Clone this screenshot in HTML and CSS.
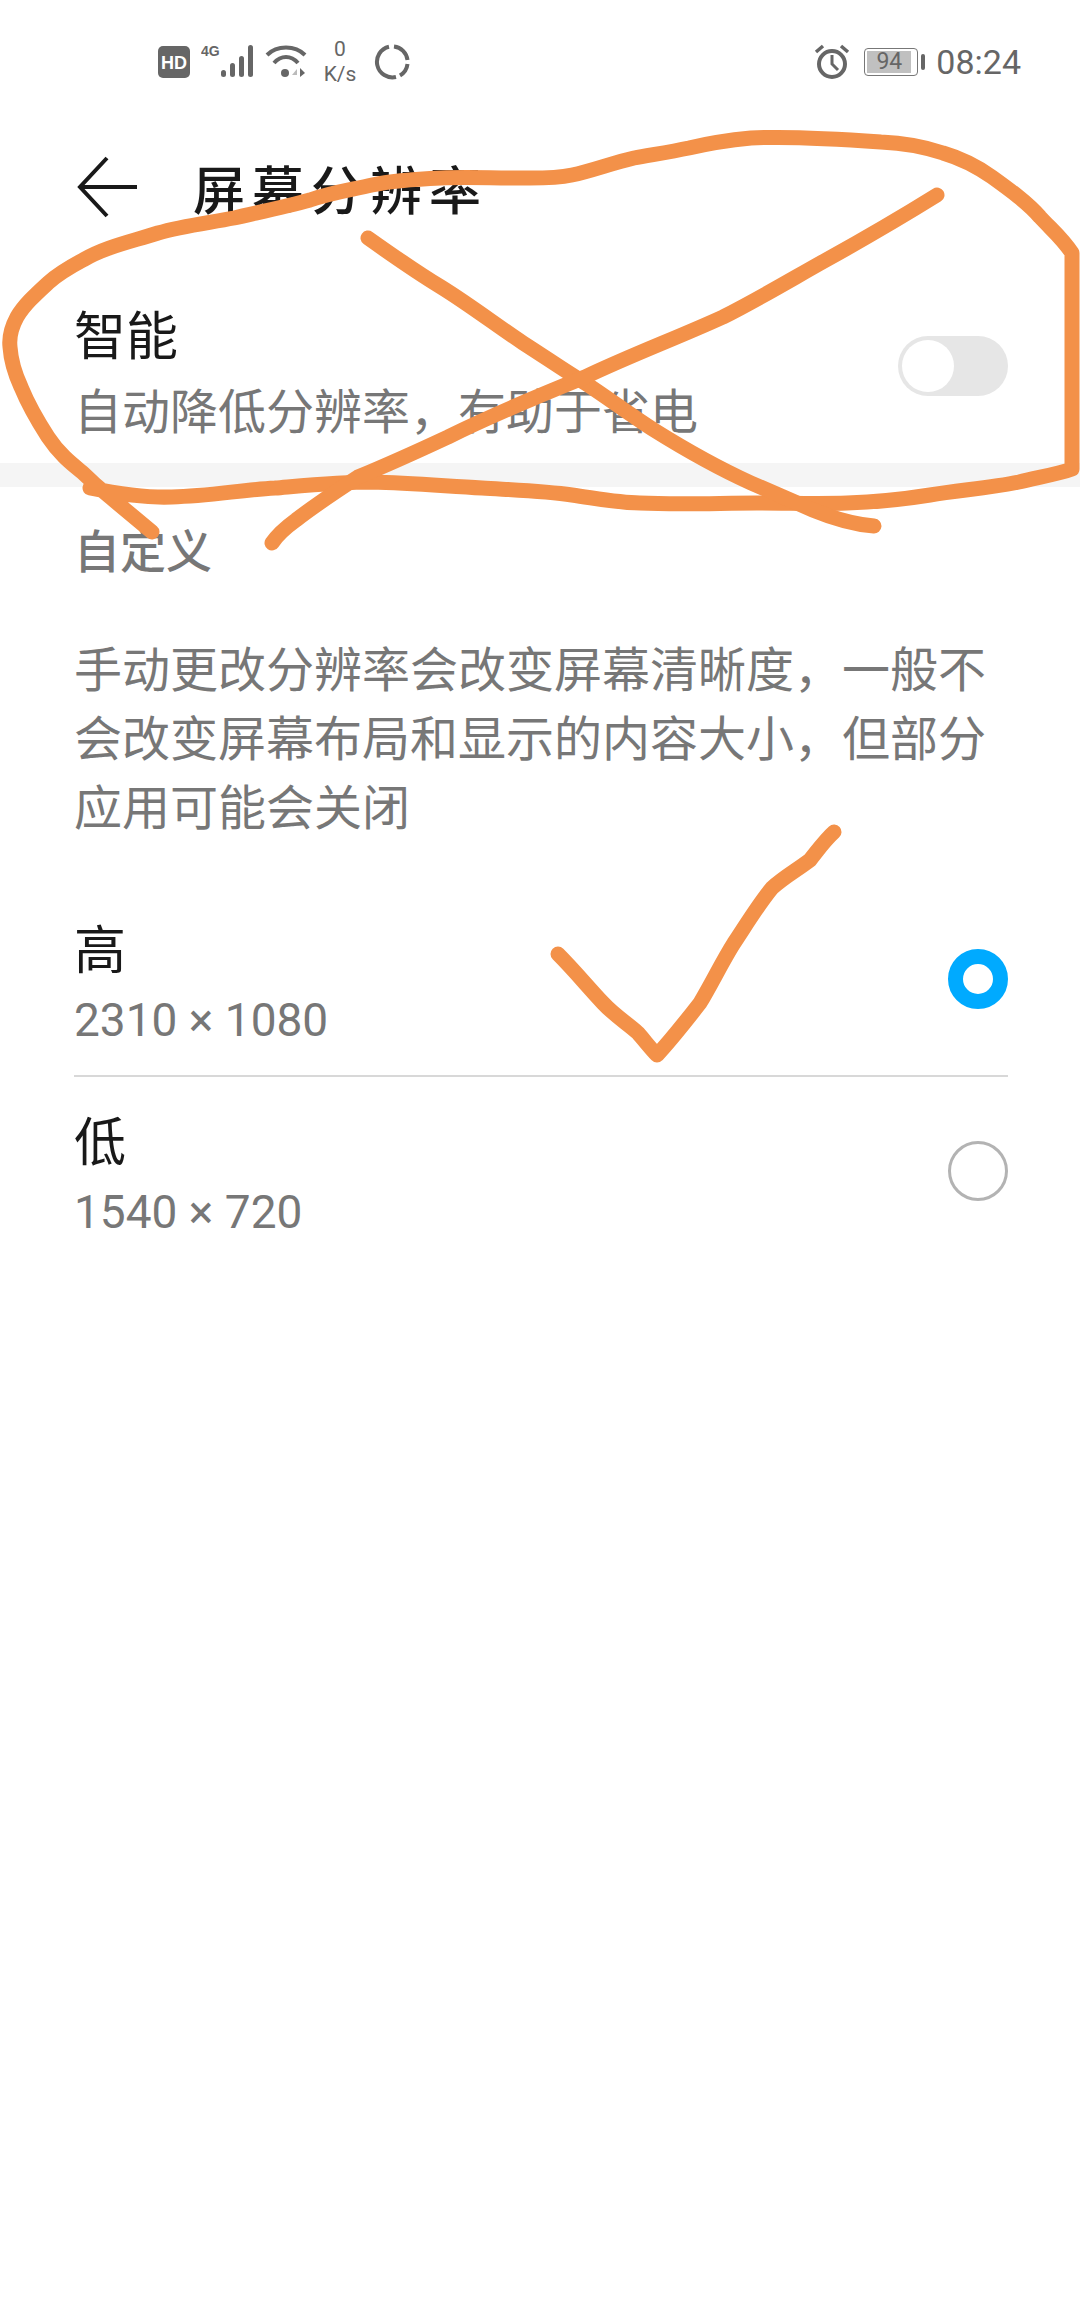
FILE: index.html

```html
<!DOCTYPE html>
<html lang="zh-CN">
<head>
    <meta charset="UTF-8">
    <meta name="viewport" content="width=device-width, initial-scale=1.0">
    <title>屏幕分辨率</title>
    <link rel="stylesheet" href="styles.css">
</head>
<body>
    <div class="screen">
        <!-- Status bar -->
        <div class="status-bar">
            <div class="status-left">
                <svg class="ic-hd" width="32" height="32" viewBox="0 0 32 32">
                    <rect width="32" height="32" rx="5" fill="#666"/>
                    <text x="16" y="23" text-anchor="middle" class="hd-text">HD</text>
                </svg>
                <svg class="ic-signal" width="54" height="36" viewBox="0 0 54 36">
                    <text x="0" y="13" class="net-text">4G</text>
                    <rect x="20" y="27" width="5" height="7" rx="2.5" fill="#666"/>
                    <rect x="29" y="20" width="5" height="14" rx="2.5" fill="#666"/>
                    <rect x="38" y="13" width="5" height="21" rx="2.5" fill="#666"/>
                    <rect x="47" y="2" width="5" height="32" rx="2.5" fill="#666"/>
                </svg>
                <svg class="ic-wifi" width="42" height="36" viewBox="0 0 42 36">
                    <path d="M2 11 C12 1 30 1 40 11" fill="none" stroke="#666" stroke-width="4"/>
                    <path d="M9 19 C16 11 26 11 33 19" fill="none" stroke="#666" stroke-width="4"/>
                    <circle cx="20" cy="29" r="4" fill="#666"/>
                    <path d="M27 31 L32 25 V31 Z" fill="#bbb"/>
                    <path d="M35 24 L40 29 L35 33 Z" fill="#666"/>
                </svg>
                <div class="net-speed"><span>0</span><span>K/s</span></div>
                <svg class="ic-ring" width="36" height="36" viewBox="0 0 36 36">
                    <path d="M20 2.5 A15.5 15.5 0 0 1 33.5 16 M33.5 20 A15.5 15.5 0 0 1 26 31.5 M22 33 A15.5 15.5 0 1 1 15 2.7" fill="none" stroke="#666" stroke-width="4"/>
                </svg>
            </div>
            <div class="status-right">
                <svg class="ic-alarm" width="36" height="36" viewBox="0 0 36 36">
                    <circle cx="18" cy="20" r="13" fill="none" stroke="#666" stroke-width="4"/>
                    <path d="M18 11 V20 L24 26" fill="none" stroke="#666" stroke-width="3"/>
                    <path d="M2 8 L9 2 M34 8 L27 2" stroke="#666" stroke-width="3.5"/>
                </svg>
                <div class="battery">
                    <div class="battery-body"><span class="battery-fill">94</span></div>
                    <div class="battery-cap"></div>
                </div>
                <span class="clock">08:24</span>
            </div>
        </div>

        <!-- Title bar -->
        <div class="title-bar">
            <svg class="back" width="62" height="62" viewBox="0 0 62 62">
                <path d="M60 31 H3 M30 2 L3 31 L30 60" fill="none" stroke="#191919" stroke-width="4"/>
            </svg>
            <h1>屏幕分辨率</h1>
        </div>

        <!-- Smart option -->
        <div class="smart-row">
            <div class="row-text">
                <div class="row-title">智能</div>
                <div class="row-sub">自动降低分辨率，有助于省电</div>
            </div>
            <div class="toggle"><div class="knob"></div></div>
        </div>
        <div class="band"></div>

        <!-- Custom resolution -->
        <div class="custom">
            <h2>自定义</h2>
            <p>手动更改分辨率会改变屏幕清晰度，一般不会改变屏幕布局和显示的内容大小，但部分应用可能会关闭</p>
        </div>

        <div class="options">
            <div class="option option-high">
                <div class="row-text">
                    <div class="row-title">高</div>
                    <div class="row-sub num">2310 × 1080</div>
                </div>
                <div class="radio radio-on"></div>
            </div>
            <div class="option option-low">
                <div class="row-text">
                    <div class="row-title">低</div>
                    <div class="row-sub num">1540 × 720</div>
                </div>
                <div class="radio"></div>
            </div>
        </div>

        <!-- Hand drawn marks on top of the screenshot -->
        <svg class="marks" width="1080" height="2310" viewBox="0 0 1080 2310">
            <path d="M90 488 C120 494 145 498 172 497 C210 496 240 490 275 488 C310 485 340 482 372 482 C410 483 445 486 482 488 C515 490 545 491 572 495 C600 499 620 503 640 503 C680 505 720 503 757 503 C790 503 820 504 847 503 C880 502 905 499 930 495 C960 490 990 488 1019 482 C1040 477 1058 474 1072 469 L1072 253 C1062 238 1052 230 1040 217 C1028 203 1010 190 992 177 C975 165 960 158 943 153 C925 147 905 143 881 142 C840 139 790 136 751 138 C730 140 710 143 689 148 C670 152 650 155 634 158 C612 163 592 171 572 175 C553 179 535 178 516 178 C490 178 465 177 441 178 C417 179 395 180 372 185 C350 190 330 193 310 200 C285 207 260 212 234 218 C208 223 182 226 158 233 C130 242 105 247 83 260 C68 268 58 274 48 283 C35 295 24 305 17 317 C11 328 9 338 10 347 C11 362 15 374 21 387 C28 404 37 420 48 437 C60 455 72 464 83 473 C92 482 100 489 110 497 C122 507 135 518 152 532" class="stroke"/>
            <path d="M368 238 C392 255 416 272 441 287 C470 305 496 325 523 343 C545 357 565 371 585 383 C608 398 632 416 654 430 C686 450 718 468 751 483 C772 492 792 501 813 510 C830 517 850 524 874 526" class="stroke"/>
            <path d="M937 195 C900 218 862 240 826 260 C792 279 757 300 723 317 C677 338 631 355 585 377 C538 396 492 415 448 437 C418 451 387 465 358 477 C335 492 314 506 296 520 C285 528 278 534 272 543" class="stroke"/>
            <path d="M558 954 C574 970 588 987 603 1003 C615 1016 627 1023 638 1033 C645 1041 651 1049 657 1055 C672 1039 686 1021 700 1003 C712 983 722 962 734 943 C746 925 758 905 772 888 C784 877 797 870 810 860 C818 850 825 840 834 832" class="stroke"/>
        </svg>
    </div>
</body>
</html>
```

FILE: styles.css

```css
* {
    box-sizing: border-box;
}

body {
    margin: 0;
    background: #fff;
    font-family: "Noto Sans CJK SC", "Noto Sans", sans-serif;
}

.screen {
    position: relative;
    width: 1080px;
    height: 2310px;
    overflow: hidden;
    background: #fff;
}

/* Status bar */
.status-bar {
    height: 124px;
    display: flex;
    justify-content: space-between;
    align-items: center;
    padding: 0 59px 0 158px;
    color: #666;
    font-family: Roboto, sans-serif;
}

.status-left,
.status-right {
    display: flex;
    align-items: center;
}

.ic-signal {
    margin-left: 11px;
    margin-top: -2px;
}

.ic-wifi {
    margin-left: 10px;
}

.ic-ring {
    margin-left: 16px;
}

.hd-text {
    font: 700 18px "Liberation Sans", sans-serif;
    fill: #fff;
}

.net-text {
    font: 700 14px "Liberation Sans", sans-serif;
    fill: #666;
}

.net-speed {
    width: 36px;
    margin-left: 15px;
    display: flex;
    flex-direction: column;
    align-items: center;
    font-size: 21px;
    line-height: 25px;
}

.ic-alarm {
    margin-right: 14px;
}

.battery {
    display: flex;
    align-items: center;
    margin-right: 11px;
}

.battery-body {
    width: 54px;
    height: 28px;
    border: 1.5px solid #777;
    border-radius: 4px;
    padding: 2px;
    display: flex;
}

.battery-fill {
    width: 44px;
    background: #c0c0c0;
    font-size: 23px;
    line-height: 21px;
    text-align: center;
}

.battery-cap {
    width: 4px;
    height: 16px;
    margin-left: 3px;
    background: #666;
    border-radius: 2px;
}

.clock {
    font-size: 34px;
}

/* Title bar */
.title-bar {
    height: 126px;
    display: flex;
    align-items: center;
    padding-left: 77px;
}

h1 {
    margin: 0 0 0 54px;
    font-size: 52px;
    letter-spacing: 7px;
    font-weight: 500;
    color: #191919;
}

/* Rows */
.row-title {
    font-size: 52px;
    line-height: 60px;
    color: #191919;
}

.row-sub {
    margin-top: 15px;
    font-size: 48px;
    line-height: 60px;
    color: #777;
}

.row-sub.num {
    margin-top: 13px;
    font-family: Roboto, sans-serif;
    font-size: 46px;
}

.smart-row {
    height: 213px;
    padding: 53px 72px 0 74px;
    display: flex;
    justify-content: space-between;
}

.toggle {
    width: 110px;
    height: 60px;
    margin-top: 33px;
    padding: 4px;
    background: #e6e6e6;
    border-radius: 30px;
}

.knob {
    width: 52px;
    height: 52px;
    background: #fff;
    border-radius: 50%;
}

.band {
    height: 24px;
    background: #f5f5f5;
}

.custom {
    padding: 31px 72px 0 74px;
}

h2 {
    margin: 0;
    font-size: 46px;
    line-height: 60px;
    font-weight: 500;
    color: #777;
}

.custom p {
    margin: 54px 0 0;
    font-size: 48px;
    line-height: 69px;
    color: #777;
}

/* Resolution options */
.options {
    margin: 53px 72px 0 74px;
}

.option {
    display: flex;
    justify-content: space-between;
    align-items: center;
    padding: 25px 0;
}

.option-high {
    border-bottom: 2px solid #d8d8d8;
}

.option-low {
    padding-top: 32px;
}

.radio {
    width: 60px;
    height: 60px;
    margin-bottom: 10px;
    border: 3px solid #b3b3b3;
    border-radius: 50%;
}

.radio-on {
    border: 15px solid #00aaff;
}

/* Hand drawn marks */
.marks {
    position: absolute;
    left: 0;
    top: 0;
}

.stroke {
    fill: none;
    stroke: #f39149;
    stroke-width: 15;
    stroke-linecap: round;
    stroke-linejoin: round;
}
```
